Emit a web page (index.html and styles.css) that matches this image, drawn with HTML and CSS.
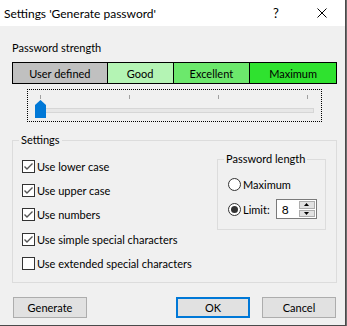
FILE: index.html
```html
<!DOCTYPE html>
<html lang="en">
<head>
  <meta charset="UTF-8">
  <title>Settings 'Generate password'</title>
  <link rel="stylesheet" href="styles.css">
</head>
<body>
  <div class="window">
    <div class="titlebar">
      <span class="title">Settings 'Generate password'</span>
      <span class="caption-btn">?</span>
      <span class="caption-btn">
        <svg width="10" height="10" viewBox="0 0 10 10"><path d="M0.5 0.5 L9.5 9.5 M9.5 0.5 L0.5 9.5" stroke="#000" stroke-width="1"/></svg>
      </span>
    </div>

    <div class="content">
      <div class="section-label">Password strength</div>
      <div class="strength">
        <div class="level user">User defined</div>
        <div class="level good">Good</div>
        <div class="level excellent">Excellent</div>
        <div class="level maximum">Maximum</div>
      </div>

      <div class="slider">
        <div class="ticks"><span></span><span></span><span></span><span></span></div>
        <div class="track-row">
          <div class="track"></div>
          <svg class="thumb" width="11" height="18" viewBox="0 0 11 18"><path d="M0 5 L5.5 0 L11 5 L11 18 L0 18 Z" fill="#0078d7"/></svg>
        </div>
      </div>

      <fieldset class="group settings">
        <legend>Settings</legend>
        <div class="settings-body">
          <div class="checks">
            <label class="check-row"><span class="box checked"></span>Use lower case</label>
            <label class="check-row"><span class="box checked"></span>Use upper case</label>
            <label class="check-row"><span class="box checked"></span>Use numbers</label>
            <label class="check-row"><span class="box checked"></span>Use simple special characters</label>
            <label class="check-row"><span class="box"></span>Use extended special characters</label>
          </div>

          <fieldset class="group length">
            <legend>Password length</legend>
            <div class="length-body">
              <label class="radio-row"><span class="radio"></span>Maximum</label>
              <label class="radio-row"><span class="radio selected"></span>Limit:
                <span class="spin">
                  <span class="spin-value">8</span>
                  <span class="spin-buttons">
                    <span class="spin-btn"><svg width="5" height="3" viewBox="0 0 5 3"><path d="M2.5 0 L5 3 L0 3 Z" fill="#000"/></svg></span>
                    <span class="spin-btn"><svg width="5" height="3" viewBox="0 0 5 3"><path d="M0 0 L5 0 L2.5 3 Z" fill="#000"/></svg></span>
                  </span>
                </span>
              </label>
            </div>
          </fieldset>
        </div>
      </fieldset>

      <div class="buttons">
        <button class="btn">Generate</button>
        <button class="btn default">OK</button>
        <button class="btn">Cancel</button>
      </div>
    </div>
  </div>
</body>
</html>
```

FILE: styles.css
```css
* {
  box-sizing: border-box;
}

body {
  margin: 0;
  background-color: #6d6d6d;
  font-family: Lato, "Liberation Sans", sans-serif;
  font-size: 11px;
  color: #000000;
}

.window {
  width: 346px;
  height: 326px;
  background-color: #f0f0f0;
  border-right: 1px solid #4a4a4a;
  border-bottom: 1px solid #4a4a4a;
  display: flex;
  flex-direction: column;
}

/* title bar */
.titlebar {
  height: 26px;
  background-color: #ffffff;
  display: flex;
  align-items: center;
  padding-left: 4px;
}

.title {
  flex: 1;
  font-size: 12px;
}

.caption-btn {
  width: 46px;
  height: 26px;
  display: flex;
  align-items: center;
  justify-content: center;
  font-size: 13px;
}

.content {
  padding: 0 8px 0 12px;
}

.section-label {
  margin-top: 14px;
  line-height: 16px;
}

/* strength bar */
.strength {
  margin-top: 6px;
  height: 22px;
  border: 1px solid #000000;
  display: flex;
}

.level {
  display: flex;
  align-items: center;
  justify-content: center;
  border-left: 1px solid #000000;
}

.level.user {
  width: 94px;
  border-left: none;
  background-color: #c0c0c0;
}

.level.good {
  width: 66px;
  background-color: #b4f4b4;
}

.level.excellent {
  width: 77px;
  background-color: #6ce86c;
}

.level.maximum {
  width: 87px;
  background-color: #2fe22f;
}

/* slider */
.slider {
  margin: 5px 0 0 15px;
  width: 295px;
  height: 33px;
  border: 1px dotted #000000;
  padding-top: 5px;
}

.ticks {
  margin-left: 12px;
  width: 268px;
  height: 4px;
  display: flex;
  justify-content: space-between;
}

.ticks span {
  width: 1px;
  background-color: #a0a0a0;
}

.track-row {
  position: relative;
  margin: 1px 0 0 7px;
  height: 18px;
}

.track {
  position: relative;
  top: 8px;
  width: 279px;
  height: 5px;
  background-color: #e7e7e7;
  border: 1px solid #d6d6d6;
}

.thumb {
  position: absolute;
  left: 0;
  top: 0;
}

/* group boxes */
.group {
  margin: 0;
  padding: 0;
  border: 1px solid #dcdcdc;
  min-inline-size: 0;
}

.group legend {
  margin-left: 6px;
  padding: 0 2px;
  line-height: 16px;
}

.settings {
  margin-top: 10px;
}

.settings-body {
  height: 134px;
  display: flex;
  justify-content: space-between;
  align-items: flex-start;
  padding: 0 10px 0 9px;
}

.checks {
  padding-top: 6px;
  display: flex;
  flex-direction: column;
}

.check-row {
  height: 24px;
  display: flex;
  align-items: center;
  gap: 2px;
}

.check-row:nth-child(4) {
  margin-top: 1px;
}

.box {
  width: 13px;
  height: 13px;
  border: 1px solid #333333;
  background-color: #ffffff;
}

.box.checked {
  background: #ffffff url("data:image/svg+xml;utf8,<svg xmlns='http://www.w3.org/2000/svg' width='11' height='11' viewBox='0 0 11 11'><path d='M1.5 5.5 L4 8 L9.5 2.5' fill='none' stroke='%23555' stroke-width='1.4'/></svg>") no-repeat center;
}

.length {
  margin-top: 3px;
  width: 109px;
}

.length-body {
  height: 62px;
  padding: 5px 0 0 10px;
  display: flex;
  flex-direction: column;
  gap: 1px;
}

.radio-row {
  height: 24px;
  display: flex;
  align-items: center;
  gap: 2px;
}

.radio {
  width: 13px;
  height: 13px;
  border: 1px solid #333333;
  border-radius: 50%;
  background-color: #ffffff;
  display: flex;
  align-items: center;
  justify-content: center;
}

.radio.selected::after {
  content: "";
  width: 7px;
  height: 7px;
  border-radius: 50%;
  background-color: #333333;
}

.spin {
  margin-left: 4px;
  width: 41px;
  height: 20px;
  border: 1px solid #7a7a7a;
  background-color: #ffffff;
  display: flex;
  align-items: center;
  padding: 1px 1px 1px 5px;
  font-size: 12px;
}

.spin-value {
  flex: 1;
}

.spin-buttons {
  width: 16px;
  height: 100%;
  display: flex;
  flex-direction: column;
  gap: 1px;
}

.spin-btn {
  flex: 1;
  background-color: #e1e1e1;
  border: 1px solid #adadad;
  display: flex;
  align-items: center;
  justify-content: center;
}

/* buttons */
.buttons {
  margin-top: 14px;
  padding: 0 1px;
  display: flex;
  gap: 12px;
}

.btn {
  width: 74px;
  height: 21px;
  font-family: inherit;
  font-size: 11px;
  background-color: #e1e1e1;
  border: 1px solid #adadad;
  padding: 0;
}

.btn.default {
  margin-left: auto;
  border: 2px solid #0078d7;
}
```
